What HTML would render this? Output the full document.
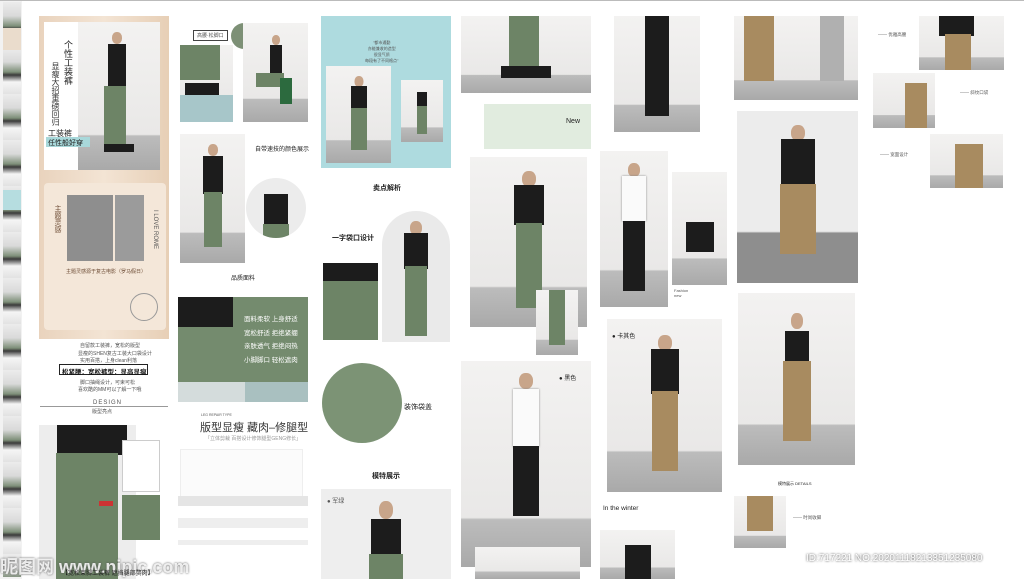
<!DOCTYPE html>
<html><head><meta charset="utf-8">
<style>
*{margin:0;padding:0;box-sizing:border-box}
body{width:1024px;height:579px;overflow:hidden;background:#fff;position:relative;font-family:"Liberation Sans","Noto Sans CJK SC",sans-serif;color:#333}
.a{position:absolute}
.p{position:absolute;background:linear-gradient(#f3f2f1 0%,#e9e8e7 76%,#bcbcbc 77%,#a9a9a9 100%);overflow:hidden}
.f{position:absolute;left:50%;transform:translateX(-50%)}
.h{position:absolute;left:50%;transform:translateX(-50%);border-radius:45%;background:#c8a58a}
.t{position:absolute;font-size:6px;color:#555;white-space:nowrap}
.g{background:#6d8466}.k{background:#a88b60}.b{background:#1c1c1c}
</style></head><body>
<!-- thumbnail strip -->
<div class="a" style="left:0;top:0;width:22px;height:579px;background:#f2f2f2"></div>
<div class="a" style="left:3px;top:2px;width:18px;height:575px;background:repeating-linear-gradient(#ececec 0,#d9d9d9 14px,#7e8f79 24px,#3a3a3a 27px,#f5f5f5 34px,#e2e2e2 46px)"></div>
<div class="a" style="left:3px;top:28px;width:18px;height:22px;background:#eadccc"></div>
<div class="a" style="left:3px;top:190px;width:18px;height:20px;background:#b6dde0"></div>
<div class="a" style="left:0;top:0;width:1024px;height:1px;background:#bbb"></div>

<!-- column 1 -->
<div class="a" style="left:39px;top:16px;width:130px;height:323px;background:linear-gradient(90deg,#e9d3bd,#f3e4d4,#e7cfb6)"></div>
<div class="a" style="left:44px;top:22px;width:116px;height:148px;background:#fff"></div>
<div class="p" style="left:78px;top:22px;width:82px;height:148px"><div class="h" style="top:10px;width:10px;height:12px;left:48%"></div><div class="f b" style="top:22px;width:18px;height:45px;left:48%"></div><div class="f g" style="top:64px;width:22px;height:60px;left:45%"></div><div class="a b" style="left:26px;top:122px;width:30px;height:8px"></div></div>
<div class="t" style="left:63px;top:40px;font-size:9px;writing-mode:vertical-rl;color:#222;line-height:10px">个性工装裤</div>
<div class="t" style="left:50px;top:62px;font-size:8px;writing-mode:vertical-rl;color:#333">显瘦大招重磅回归</div>
<div class="t" style="left:48px;top:128px;font-size:8px;color:#222">工装裤</div>
<div class="a" style="left:46px;top:137px;width:44px;height:10px;background:#a8d8da"></div>
<div class="t" style="left:48px;top:138px;font-size:7px;color:#222">任性般好穿</div>
<div class="a" style="left:44px;top:183px;width:122px;height:147px;background:#f4e7d9;border-radius:4px"></div>
<div class="a" style="left:67px;top:195px;width:46px;height:66px;background:#8e8e8e"></div>
<div class="a" style="left:115px;top:195px;width:29px;height:66px;background:#9b9b9b"></div>
<div class="t" style="left:52px;top:205px;writing-mode:vertical-rl;font-size:7px;color:#6b4a33">主题灵感</div>
<div class="t" style="left:152px;top:210px;writing-mode:vertical-rl;font-size:6px">I LOVE ROME</div>
<div class="t" style="left:66px;top:268px;color:#6b4a33;font-size:5px">主题灵感源于复古电影（罗马假日）</div>
<div class="a" style="left:130px;top:293px;width:28px;height:28px;border:1px solid #999;border-radius:50%"></div>
<div class="t" style="left:80px;top:342px;font-size:5px">自留款工装裤，宽松的版型</div>
<div class="t" style="left:78px;top:350px;font-size:5px">显瘦的SHEN复古工装大口袋设计</div>
<div class="t" style="left:80px;top:357px;font-size:5px">实用百搭，上身clean利落</div>
<div class="a" style="left:59px;top:364px;width:89px;height:11px;border:1px solid #222"></div>
<div class="t" style="left:62px;top:366px;font-size:6.5px;color:#111;font-weight:bold">松紧腰：宽松裤型：显高显瘦</div>
<div class="t" style="left:80px;top:379px;font-size:5px">脚口抽绳设计，可束可松</div>
<div class="t" style="left:78px;top:386px;font-size:5px">喜欢酷的MM可以了解一下哦</div>
<div class="a" style="left:40px;top:406px;width:128px;height:1px;background:#999"></div>
<div class="t" style="left:90px;top:400px;font-size:6px;background:#fff;padding:0 3px;letter-spacing:1px">DESIGN</div>
<div class="t" style="left:92px;top:408px;font-size:5px">版型亮点</div>
<div class="p" style="left:39px;top:425px;width:97px;height:154px;background:#ededed"><div class="a b" style="left:18px;top:0;width:70px;height:30px"></div><div class="a g" style="left:17px;top:28px;width:62px;height:126px"></div><div class="a" style="left:60px;top:76px;width:14px;height:5px;background:#c33"></div></div>
<div class="a" style="left:122px;top:440px;width:38px;height:52px;background:#fff;border:1px solid #ccc"></div>
<div class="a g" style="left:122px;top:495px;width:38px;height:45px"></div>
<div class="t" style="left:0;top:553px;font-size:18px;color:rgba(255,255,255,.85);font-weight:bold;text-shadow:0 0 2px #555">昵图网 www.nipic.com</div>
<div class="t" style="left:62px;top:568px;font-size:6px;color:#222">【宽松束脚工装裤 遮挡腿部赘肉】</div>

<!-- column 2 -->
<div class="t" style="left:193px;top:30px;font-size:5px;border:1px solid #444;padding:1px 3px">高腰·松脚口</div>
<div class="a" style="left:231px;top:23px;width:26px;height:26px;border-radius:50%;background:#7d9076"></div>
<div class="p" style="left:180px;top:45px;width:53px;height:77px"><div class="a g" style="left:0;top:0;width:40px;height:35px"></div><div class="a b" style="left:5px;top:38px;width:34px;height:14px"></div></div>
<div class="a" style="left:180px;top:95px;width:53px;height:27px;background:#a7c6c9"></div>
<div class="p" style="left:243px;top:23px;width:65px;height:99px"><div class="h" style="top:12px;width:8px;height:10px"></div><div class="f b" style="top:22px;width:12px;height:28px"></div><div class="a g" style="left:13px;top:50px;width:28px;height:14px"></div><div class="a" style="left:37px;top:55px;width:12px;height:26px;background:#2c6a3e"></div></div>
<div class="p" style="left:180px;top:134px;width:65px;height:129px"><div class="h" style="top:10px;width:10px;height:12px"></div><div class="f b" style="top:22px;width:20px;height:38px"></div><div class="f g" style="top:58px;width:18px;height:55px"></div></div>
<div class="t" style="left:255px;top:144px;font-size:6px;color:#222">自带速技的颜色展示</div>
<div class="a" style="left:246px;top:178px;width:60px;height:60px;border-radius:50%;background:#ececec;overflow:hidden"><div class="a b" style="left:18px;top:16px;width:24px;height:30px"></div><div class="a g" style="left:17px;top:46px;width:26px;height:14px"></div></div>
<div class="t" style="left:231px;top:273px;font-size:6px;color:#222">品质面料</div>
<div class="a g" style="left:178px;top:297px;width:130px;height:85px;background:#748b6e"></div>
<div class="a b" style="left:178px;top:297px;width:55px;height:30px"></div>
<div class="a" style="left:178px;top:382px;width:130px;height:20px;background:#d4dcdc"></div>
<div class="a" style="left:245px;top:382px;width:63px;height:20px;background:#a9c0c0"></div>
<div class="t" style="left:244px;top:313px;color:#fff;font-size:6.5px;line-height:13.5px;white-space:pre">面料柔软 上身舒适
宽松舒适 拒绝紧绷
亲肤透气 拒绝闷热
小脚脚口 轻松遮肉</div>
<div class="t" style="left:201px;top:413px;font-size:3.5px">LEG REPAIR TYPE</div>
<div class="t" style="left:200px;top:419px;font-size:11px;color:#333">版型显瘦 藏肉–修腿型</div>
<div class="t" style="left:205px;top:435px;font-size:5px;color:#999">「立体剪裁 百搭设计修饰腿型GENG修长」</div>
<div class="a" style="left:180px;top:449px;width:123px;height:53px;border:1px solid #eee;background:#fbfbfb"></div>
<div class="a" style="left:178px;top:496px;width:130px;height:10px;background:#e5e5e5"></div>
<div class="a" style="left:178px;top:518px;width:130px;height:10px;background:#eee"></div>
<div class="a" style="left:178px;top:540px;width:130px;height:5px;background:#eee"></div>

<!-- column 3 -->
<div class="a" style="left:321px;top:16px;width:130px;height:152px;background:#aedbdf"></div>
<div class="p" style="left:326px;top:66px;width:65px;height:97px"><div class="h" style="top:10px;width:9px;height:11px"></div><div class="f b" style="top:20px;width:16px;height:22px"></div><div class="f g" style="top:42px;width:16px;height:42px"></div></div>
<div class="p" style="left:401px;top:80px;width:42px;height:62px"><div class="f b" style="top:12px;width:10px;height:14px"></div><div class="f g" style="top:26px;width:10px;height:28px"></div></div>
<div class="t" style="left:365px;top:40px;font-size:4px;line-height:6px;text-align:center;white-space:pre">"都市通勤
亦能兼收的造型
很显气质
每段有了不同格点"</div>
<div class="t" style="left:373px;top:183px;font-size:7px;color:#222;font-weight:bold">卖点解析</div>
<div class="a" style="left:382px;top:211px;width:68px;height:131px;border-radius:34px 34px 0 0;background:#eaeaea;overflow:hidden"><div class="h" style="top:10px;width:12px;height:14px"></div><div class="f b" style="top:22px;width:24px;height:36px"></div><div class="f g" style="top:55px;width:22px;height:70px"></div></div>
<div class="t" style="left:332px;top:233px;font-size:7px;color:#222;font-weight:bold">一字袋口设计</div>
<div class="a g" style="left:323px;top:263px;width:55px;height:77px"></div>
<div class="a b" style="left:323px;top:263px;width:55px;height:18px"></div>
<div class="a g" style="left:322px;top:363px;width:80px;height:80px;border-radius:50%;background:#7c9375"></div>
<div class="t" style="left:404px;top:402px;font-size:7px;color:#222">装饰袋盖</div>
<div class="t" style="left:372px;top:471px;font-size:7px;color:#222;font-weight:bold">模特展示</div>
<div class="p" style="left:321px;top:489px;width:130px;height:90px;background:#eee"><div class="h" style="top:12px;width:14px;height:18px"></div><div class="f b" style="top:30px;width:30px;height:35px"></div><div class="f g" style="top:65px;width:34px;height:30px"></div></div>
<div class="t" style="left:327px;top:496px;font-size:6px">● 军绿</div>

<!-- column 4 -->
<div class="p" style="left:461px;top:16px;width:130px;height:77px"><div class="a g" style="left:48px;top:0;width:30px;height:50px"></div><div class="a b" style="left:40px;top:50px;width:50px;height:12px"></div></div>
<div class="a" style="left:484px;top:104px;width:107px;height:45px;background:#e1ecdf"></div>
<div class="t" style="left:566px;top:118px;font-size:7px;color:#222">New</div>
<div class="p" style="left:470px;top:157px;width:117px;height:170px"><div class="h" style="top:14px;width:14px;height:16px"></div><div class="f b" style="top:28px;width:30px;height:40px"></div><div class="f g" style="top:66px;width:26px;height:85px"></div></div>
<div class="p" style="left:536px;top:290px;width:42px;height:65px"><div class="f g" style="top:0;width:16px;height:55px"></div></div>
<div class="p" style="left:461px;top:361px;width:130px;height:206px"><div class="h" style="top:12px;width:14px;height:16px"></div><div class="f" style="top:28px;width:26px;height:58px;background:#fafafa;box-shadow:0 0 2px #888"></div><div class="f b" style="top:85px;width:26px;height:70px"></div></div>
<div class="t" style="left:559px;top:373px;font-size:6px;color:#222">● 黑色</div>
<div class="p" style="left:475px;top:547px;width:105px;height:32px"></div>

<!-- column 5 -->
<div class="p" style="left:614px;top:16px;width:86px;height:116px"><div class="f b" style="top:0;width:24px;height:100px"></div></div>
<div class="p" style="left:600px;top:151px;width:68px;height:156px"><div class="h" style="top:12px;width:12px;height:14px"></div><div class="f" style="top:25px;width:24px;height:45px;background:#fafafa;box-shadow:0 0 2px #888"></div><div class="f b" style="top:70px;width:22px;height:70px"></div></div>
<div class="p" style="left:672px;top:172px;width:55px;height:113px"><div class="f b" style="top:50px;width:28px;height:30px"></div></div>
<div class="t" style="left:674px;top:288px;font-size:4px">Fashion<br>new</div>
<div class="p" style="left:607px;top:319px;width:115px;height:173px"><div class="h" style="top:16px;width:14px;height:16px"></div><div class="f b" style="top:30px;width:28px;height:45px"></div><div class="f k" style="top:72px;width:26px;height:80px"></div></div>
<div class="t" style="left:612px;top:331px;font-size:6px;color:#222">● 卡其色</div>
<div class="t" style="left:603px;top:505px;font-size:6.5px;color:#222">In the winter</div>
<div class="p" style="left:600px;top:530px;width:75px;height:49px"><div class="f b" style="top:15px;width:26px;height:34px"></div></div>

<!-- column 6 -->
<div class="p" style="left:734px;top:16px;width:124px;height:84px"><div class="a k" style="left:10px;top:0;width:30px;height:65px"></div><div class="a" style="left:86px;top:0;width:24px;height:65px;background:#b0b0b0"></div></div>
<div class="p" style="left:737px;top:111px;width:121px;height:172px;background:linear-gradient(#ececec 70%,#8e8e8e 71%)"><div class="h" style="top:14px;width:14px;height:16px"></div><div class="f b" style="top:28px;width:34px;height:45px"></div><div class="f k" style="top:73px;width:36px;height:70px"></div></div>
<div class="p" style="left:738px;top:293px;width:117px;height:172px"><div class="h" style="top:20px;width:12px;height:16px"></div><div class="f b" style="top:38px;width:24px;height:30px"></div><div class="f k" style="top:68px;width:28px;height:80px"></div></div>
<div class="t" style="left:778px;top:481px;font-size:4px;color:#222">模特展示 DETAILS</div>
<div class="p" style="left:734px;top:496px;width:52px;height:52px"><div class="f k" style="top:0;width:26px;height:35px"></div></div>
<div class="t" style="left:793px;top:515px;font-size:4.5px">—— 时尚收脚</div>

<!-- column 7 -->
<div class="p" style="left:919px;top:16px;width:85px;height:54px"><div class="a b" style="left:20px;top:0;width:35px;height:20px"></div><div class="a k" style="left:26px;top:18px;width:26px;height:36px"></div></div>
<div class="t" style="left:878px;top:32px;font-size:4.5px">—— 优雅高腰</div>
<div class="p" style="left:873px;top:73px;width:62px;height:55px"><div class="a k" style="left:32px;top:10px;width:22px;height:45px"></div></div>
<div class="t" style="left:960px;top:90px;font-size:4.5px">—— 斜纹口袋</div>
<div class="p" style="left:930px;top:134px;width:73px;height:54px"><div class="a k" style="left:25px;top:10px;width:28px;height:44px"></div></div>
<div class="t" style="left:880px;top:152px;font-size:4.5px">—— 宽面设计</div>

<div class="t" style="left:806px;top:553px;font-size:10px;color:#fff;text-shadow:0 0 2px #333">ID:717221 NO:20201118213351235080</div>
</body></html>
